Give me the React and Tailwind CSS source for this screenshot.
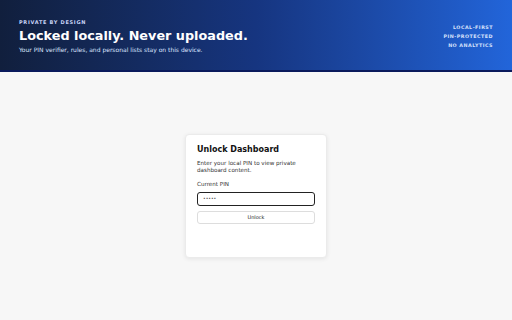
export default function App() {
  return (
    <div className="flex h-[320px] w-[512px] flex-col bg-[#f7f7f7]" style={{ fontFamily: '"DejaVu Sans", sans-serif' }}>
      <header className="flex h-[72px] shrink-0 items-start justify-between border-b-2 border-[#0a1a5c] bg-gradient-to-r from-[#111f3d] via-[#163580] to-[#2265da] px-[19px] pt-[19px]">
        <div>
          <p className="text-[5px] font-bold uppercase leading-[7px] tracking-[0.14em] text-[#c8d3f5]">Private by design</p>
          <h1 className="mt-[1px] text-[12.8px] font-bold leading-[18px] text-white">Locked locally. Never uploaded.</h1>
          <p className="text-[6px] leading-[9px] text-[#dbe4ff]">Your PIN verifier, rules, and personal lists stay on this device.</p>
        </div>
        <ul className="mt-[5px] flex flex-col items-end gap-[2px] text-[4.8px] font-bold uppercase leading-[7px] tracking-[0.1em] text-[#d6e0fb]">
          <li>Local-first</li>
          <li>PIN-protected</li>
          <li>No analytics</li>
        </ul>
      </header>
      <main className="flex flex-1 items-center justify-center">
        <div className="flex h-[124px] w-[142px] flex-col rounded-[4px] border border-[#ebebeb] bg-white px-[11px] pt-[9px] shadow-[0_1px_4px_rgba(0,0,0,0.08)]">
          <h2 className="text-[8px] font-bold leading-[12px] text-[#111]">Unlock Dashboard</h2>
          <p className="mt-[4px] text-[5.6px] leading-[7px] text-[#333]">Enter your local PIN to view private dashboard content.</p>
          <label className="mt-[6px] text-[5.6px] leading-[8px] text-[#333]">Current PIN</label>
          <div className="mt-[4px] flex h-[14px] items-center rounded-[3px] border border-[#222] px-[5px] text-[4.5px] text-[#555]">•••••</div>
          <button className="mt-[5px] h-[13px] rounded-[3px] border border-[#ddd] bg-white text-[5px] text-[#222]">Unlock</button>
        </div>
      </main>
    </div>
  );
}
